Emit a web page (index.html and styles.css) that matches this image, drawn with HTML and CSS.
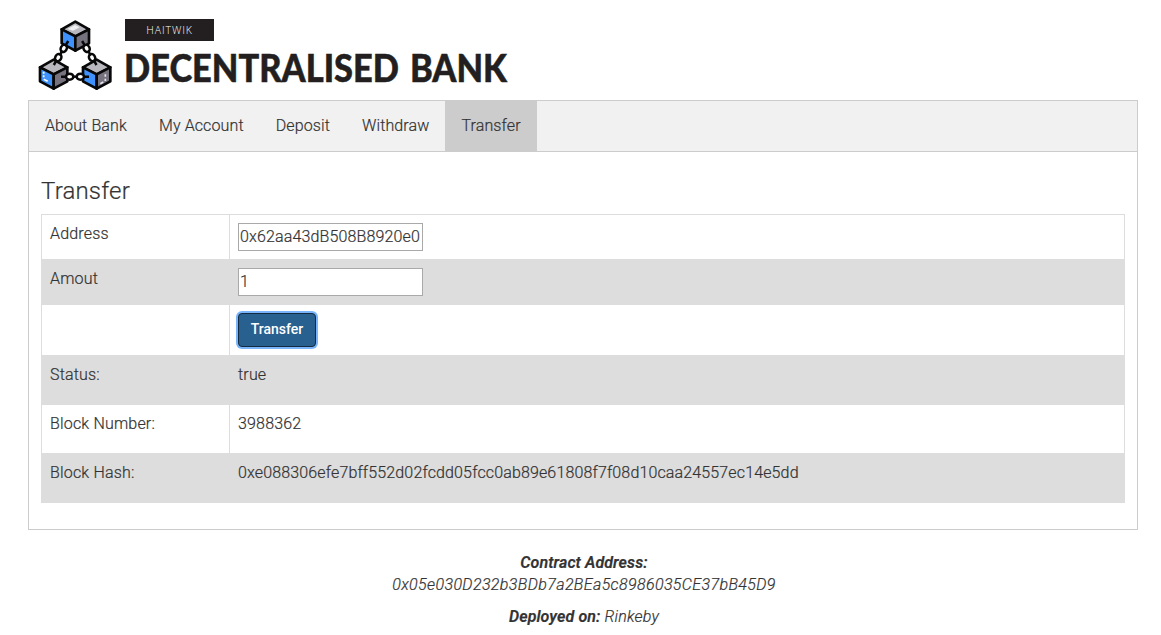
FILE: index.html
```html
<!DOCTYPE html>
<html lang="en">
<head>
<meta charset="utf-8">
<title>Decentralised Bank</title>
<link rel="stylesheet" href="styles.css">
</head>
<body>
<header class="brand">
  <svg class="logo" viewBox="0 0 270 252" aria-hidden="true">
    <defs>
      <g id="cube" stroke="#080808" stroke-width="8" stroke-linejoin="round">
        <path d="M0-44 41-21 0 0-41-21Z" fill="#b8b8be"/>
        <path d="M-41-21 0 0V43L-41 21Z" fill="#3f92fb"/>
        <path d="M41-21 0 0V43L41 21Z" fill="#76737f"/>
      </g>
      <g id="chain" fill="none" stroke="#080808" stroke-width="7.5">
        <path d="M-42 0H-26M26 0H42"/>
        <ellipse cx="-16" rx="11" ry="9" fill="#fff"/>
        <ellipse cx="16" rx="11" ry="9" fill="#fff"/>
        <path d="M-8 0H8"/>
      </g>
    </defs>
    <use href="#cube" x="136" y="73"/>
    <use href="#cube" x="71" y="187"/>
    <use href="#cube" x="200" y="187"/>
    <path d="M112 51 135 39l14 7-20 10Z" fill="#eee"/>
    <path d="M41 179v6M41 190v6M41 202l12 6" stroke="#fff" stroke-width="5"/>
    <path d="M211 215l9-5M226 207v-7M226 194v-7" stroke="#e4e4e8" stroke-width="5"/>
    <use href="#chain" transform="translate(135 194)"/>
    <use href="#chain" transform="translate(93 123) rotate(-59)"/>
    <use href="#chain" transform="translate(178 123) rotate(59)"/>
  </svg>
  <div class="brand-text">
    <span class="tag">HAITWIK</span>
    <svg class="wordmark" viewBox="0 0 390 44" role="img" aria-label="Decentralised Bank">
      <text x="-1" y="35" textLength="383" lengthAdjust="spacingAndGlyphs">DECENTRALISED BANK</text>
    </svg>
  </div>
</header>
<nav class="tabs">
  <button class="tab">About Bank</button>
  <button class="tab">My Account</button>
  <button class="tab">Deposit</button>
  <button class="tab">Withdraw</button>
  <button class="tab active">Transfer</button>
</nav>
<main class="panel">
  <h3 class="heading">Transfer</h3>
  <table class="form-table">
    <tr class="row-field"><td class="label">Address</td><td><input class="field" value="0x62aa43dB508B8920e05"></td></tr>
    <tr class="row-field"><td class="label">Amout</td><td><input class="field" value="1"></td></tr>
    <tr class="row-action"><td class="label"></td><td><button class="submit">Transfer</button></td></tr>
    <tr class="row-info"><td class="label">Status:</td><td>true</td></tr>
    <tr class="row-info"><td class="label">Block Number:</td><td>3988362</td></tr>
    <tr class="row-info"><td class="label">Block Hash:</td><td class="hash">0xe088306efe7bff552d02fcdd05fcc0ab89e61808f7f08d10caa24557ec14e5dd</td></tr>
  </table>
</main>
<footer class="contract">
  <p class="line"><b>Contract Address:</b><br><span class="address">0x05e030D232b3BDb7a2BEa5c8986035CE37bB45D9</span></p>
  <p class="line"><b>Deployed on:</b> Rinkeby</p>
</footer>
</body>
</html>
```
FILE: styles.css
```css
* { box-sizing: border-box; }
body {
  margin: 0;
  padding: 12px 23px 0 28px;
  font: 300 16px/22px Roboto, "Liberation Sans", sans-serif;
  letter-spacing: 0.18px;
  color: #333;
  background: #fff;
  overflow: hidden;
  -webkit-text-stroke: 0.2px;
}
.brand { display: flex; height: 88px; padding-left: 2px; }
.logo { width: 90px; height: 84px; flex: none; }
.brand-text { padding: 7px 0 0 5px; }
.tag {
  display: block;
  width: 89px;
  height: 22px;
  background: #231f20;
  color: #fff;
  font: 300 10.5px/22px "Open Sans", sans-serif;
  letter-spacing: 0.9px;
  text-align: center;
  -webkit-text-stroke: 0;
}
.wordmark { display: block; width: 390px; height: 44px; margin-top: 6px; overflow: visible; }
.wordmark text {
  font: 900 37.5px/1 Lato, sans-serif;
  letter-spacing: 0;
  word-spacing: 3px;
  fill: #231f20;
  stroke: #231f20;
  stroke-width: 0.5px;
}
.tabs {
  display: flex;
  width: 1110px;
  height: 52px;
  border: 1px solid #ccc;
  background: #f1f1f1;
}
.tab {
  padding: 0 16px;
  border: 0;
  background: none;
  color: #333;
  font: inherit;
  letter-spacing: 0.12px;
}
.tab.active { background: #ccc; }
.panel {
  width: 1110px;
  height: 378px;
  padding: 26px 12px 0;
  border: 1px solid #ccc;
  border-top: 0;
}
.heading { margin: 0 0 10px; font-size: 24px; font-weight: 300; line-height: 26px; }
.form-table {
  width: 1084px;
  border-collapse: collapse;
  table-layout: fixed;
}
.form-table td { padding: 8px; border: 1px solid #ddd; vertical-align: top; }
.form-table .row-action td { padding: 7px 8px; }
.form-table tr:nth-child(even) { background: #ddd; }
.form-table .label { width: 188px; }
.form-table .hash { letter-spacing: 0.14px; }
.row-field { height: 45px; }
.row-action { height: 51px; }
.row-info { height: 49px; }
.field {
  display: block;
  width: 185px;
  height: 28px;
  padding: 0 2px 1px 1px;
  border: 1px solid #a9a9a9;
  background: #fff;
  color: #333;
  font: inherit;
  letter-spacing: 0.14px;
}
.submit {
  display: block;
  width: 78px;
  height: 34px;
  margin-top: 1px;
  padding: 0 0 2px;
  border: 1px solid #122b40;
  border-radius: 4px;
  background: #286090;
  box-shadow: 0 0 0 2px #7ab5fb;
  color: #fff;
  font: 500 14px/20px Roboto, sans-serif;
  -webkit-text-stroke: 0;
}
.contract { width: 1112px; padding-top: 22px; text-align: center; font-style: italic; }
.address { letter-spacing: 0.37px; }
.line { margin: 0 0 10px; }
.line b { font-weight: 600; letter-spacing: 0.1px; }
```
